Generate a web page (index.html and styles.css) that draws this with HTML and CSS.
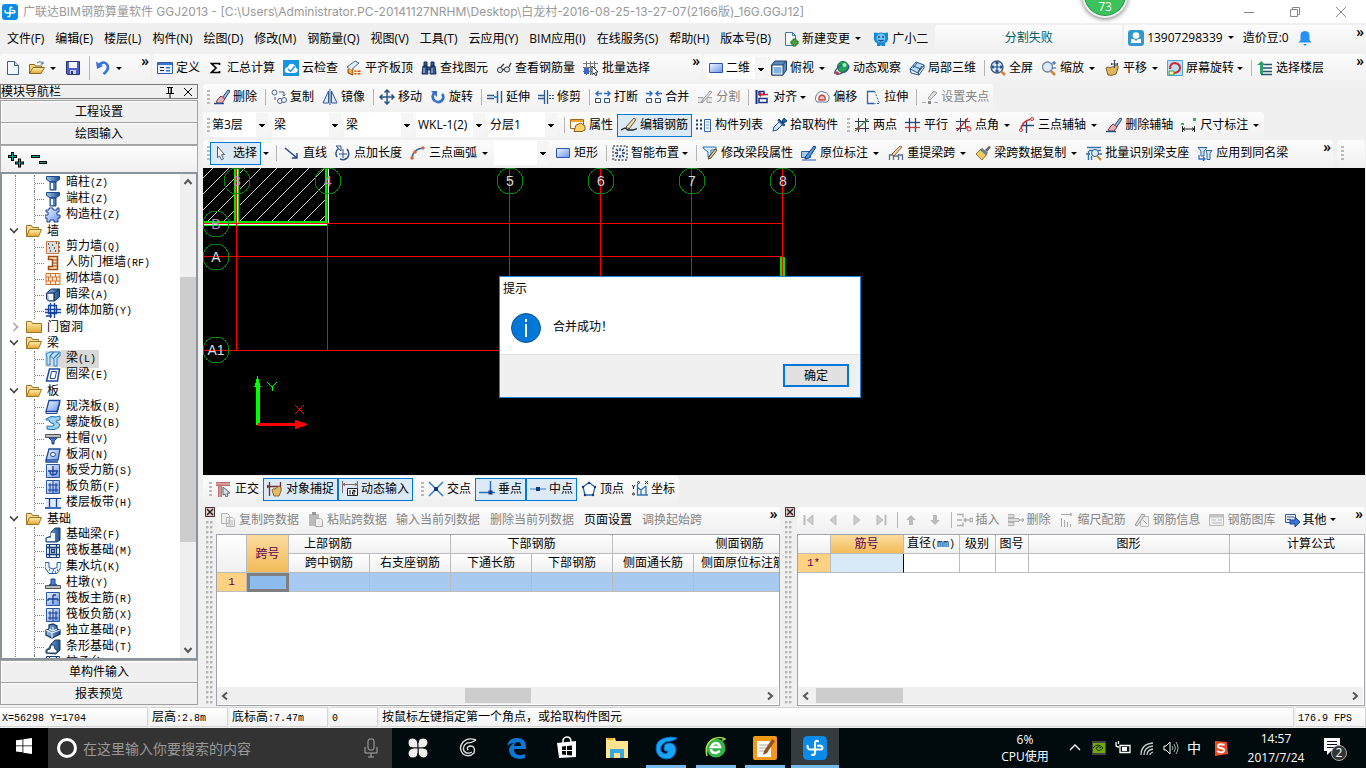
FILE: index.html
```html
<!DOCTYPE html>
<html lang="zh-CN">
<head>
<meta charset="utf-8">
<title>广联达BIM钢筋算量软件 GGJ2013</title>
<link rel="stylesheet" href="styles.css">
</head>
<body>
<svg class="defs" aria-hidden="true">
<defs>
<linearGradient id="gb" x2="1" y2="1"><stop stop-color="#f2f7ff"/><stop offset="1" stop-color="#6a94ee"/></linearGradient>
<linearGradient id="gy" x2="0" y2="1"><stop stop-color="#fff0b0"/><stop offset="1" stop-color="#e3a62f"/></linearGradient>
<linearGradient id="gs" x2="1" y2="0"><stop stop-color="#9cc2ea"/><stop offset="1" stop-color="#1c4d8c"/></linearGradient>
</defs>
<symbol id="logo" viewBox="0 0 16 16"><rect width="16" height="16" rx="3" fill="#0a8be8"/><path d="M10 3.500Q8 2.500 8 5V11Q8 13 6 12.500M10 6.500Q13 6 13 8Q13 9 11 9H5Q3 9 3 6.500" fill="none" stroke="#fff" stroke-width="1.400" stroke-linecap="round"/></symbol>
<symbol id="new" viewBox="0 0 16 16"><path d="M2.500 1.500h7l4 4v9h-11z" fill="#f3f8ff" stroke="#3d5c8c"/><path d="M9.500 1.500v4h4" fill="#bcd0f0" stroke="#3d5c8c"/></symbol>
<symbol id="open" viewBox="0 0 16 16"><path d="M.5 13.500v-9h5l1 1.500h6v3" fill="#f6d27b" stroke="#8a6a2a"/><path d="M.5 13.500 4 7.500h11.500L12 13.500z" fill="url(#gy)" stroke="#8a6a2a"/><path d="M8 3q4-3 6 1m0-2.500V4h-2.500" fill="none" stroke="#4f6c8c"/></symbol>
<symbol id="save" viewBox="0 0 16 16"><path d="M1.500 1.500h13v13h-12l-1-1z" fill="#4b5fc4" stroke="#28357d"/><path d="M4 2h8v6H4z" fill="#f4f7ff"/><path d="M5 10h6v4H5z" fill="#c7cfea"/><path d="M6 11h2v3H6z" fill="#28357d"/></symbol>
<symbol id="undo" viewBox="0 0 16 16"><path d="M3 6q5-6 9-1.500Q15 9 8.500 14" fill="none" stroke="#3b72d9" stroke-width="2.600"/><path d="M1 1.500 2 9l6-3z" fill="#3b72d9"/></symbol>
<symbol id="def" viewBox="0 0 16 16"><path d="M.5 2.500h15v11H.5z" fill="#e8f1ff" stroke="#2e5ca8"/><path d="M1 3h14v2H1z" fill="#3973d2"/><path d="M3 7.500h4m-4 3h4" stroke="#222"/><path d="M9 7h4v1.500H9zm0 3h4v1.500H9z" fill="#3973d2"/></symbol>
<symbol id="sum" viewBox="0 0 16 16"><path d="M11.500 5V3.500H3.500L8 8l-4.500 4.500h8V11" fill="none" stroke="#000" stroke-width="1.700"/></symbol>
<symbol id="cloud" viewBox="0 0 16 16"><path d="M0 0h16v16H0z" fill="#1795e0"/><path d="M4 13q-3-1-2-4 1-2 3-2 1-4 5-3 3 1 3 4 3 1 1 4-1 1-3 1z" fill="#fff"/><path d="m5 9 2.500 2.500L12 6" fill="none" stroke="#1795e0" stroke-width="1.500"/></symbol>
<symbol id="flush" viewBox="0 0 16 16"><path d="m1 7 8-6 4 2-8 7z" fill="#e2ecfa" stroke="#426a9f"/><path d="M2 9v4l5 2V9" fill="#e9b13c" stroke="#8c3b1a"/><path d="M8 10h7v5H8zm0 2.500h7M11 10v5" fill="#d04c24" stroke="#fff2cf"/></symbol>
<symbol id="find" viewBox="0 0 16 16"><path d="M2 6h4l1 8H1zm8 0h4l1 8H9zM3 2h3v4H3zm7 0h3v4h-3zM6 7h4v3H6z" fill="#34568b" stroke="#183155"/><path d="M3 8v5m8-5v5" stroke="#b7cff0"/></symbol>
<symbol id="glass" viewBox="0 0 16 16"><circle cx="4" cy="10" r="2.600" fill="#dde6ee" stroke="#333"/><circle cx="11" cy="9.500" r="2.600" fill="#dde6ee" stroke="#333"/><path d="M6.500 9.500h2M5 7l3-3m5 3 2-4" fill="none" stroke="#333" stroke-width="1.300"/></symbol>
<symbol id="batch" viewBox="0 0 16 16"><path d="M0 3.500h15M0 7.500h13M0 11.500h9M3.500 1v14m4-14v14m4-14v9" stroke="#7a7a7a"/><path d="M1 8h5v6H1z" fill="#3a67c5"/><path d="m9 6 6 6-2.500.3L14 15l-1.500.7L11 13l-2 1.500z" fill="#fff" stroke="#333"/></symbol>
<symbol id="rect" viewBox="0 0 16 16"><path d="M1.500 3.500h13v9h-13z" fill="url(#gb)" stroke="#2c54b0"/></symbol>
<symbol id="cube" viewBox="0 0 16 16"><path d="M.5 5 4 1h11.500v9L12 15H.5z" fill="#5d89b8" stroke="#1f4470"/><path d="M1 5h11v10H1z" fill="#fff" stroke="#1f4470"/><path d="M2.500 7h8v6.500h-8z" fill="#7fb4e5"/><path d="M12 5 15 1" stroke="#1f4470"/></symbol>
<symbol id="orbit" viewBox="0 0 16 16"><circle cx="9" cy="7" r="5.500" fill="#25a35b" stroke="#146a3a"/><circle cx="10.500" cy="5" r="2" fill="#a6edbd"/><path d="M1 14Q0 9 8 5m6 0q3 3-4 7-5 3-8 2" fill="none" stroke="#344f8e" stroke-width="1.300"/><circle cx="3" cy="13" r="1.800" fill="#c1402b"/></symbol>
<symbol id="local" viewBox="0 0 16 16"><path d="m1 9 6-7 8 3-6 8z" fill="#b9dcf5" stroke="#24568a"/><path d="m4 6 8 3m-8-1 4-5m1 9 4-6M1 9l1 4 8 2-1-3m1 3 5-7V5" fill="none" stroke="#24568a"/></symbol>
<symbol id="full" viewBox="0 0 16 16"><circle cx="7" cy="7" r="6" fill="#dcebfb" stroke="#3d5778" stroke-width="1.300"/><path d="M7 2v10M2 7h10M5.500 3.500 7 2l1.500 1.500m-3 7L7 12l1.500-1.500m-5-5L2 7l1.500 1.500m7-3L12 7l-1.500 1.500" fill="none" stroke="#174a91" stroke-width="1.200"/><path d="m11 11 4 4" stroke="#d28531" stroke-width="2.500"/></symbol>
<symbol id="zoom" viewBox="0 0 16 16"><circle cx="6.500" cy="7" r="5" fill="#dcebfb" stroke="#70849b" stroke-width="1.300"/><path d="m10 11 4 4" stroke="#d28531" stroke-width="2.500"/><path d="M13 1v4m-2-2h4m-4 5h4" stroke="#255db0"/></symbol>
<symbol id="pan" viewBox="0 0 16 16"><path d="M2 8q2-2 4 0l6-3q3 0 2 3l-2 6q-4 2-8 1z" fill="#e2b558" stroke="#81602a"/><path d="M10.500 0v8M7 4h7M9.500 1l1-1 1 1M8 3 7 4l1 1m5-2 1 1-1 1" fill="none" stroke="#344765"/></symbol>
<symbol id="rot" viewBox="0 0 16 16"><path d="M.5.500h15v15H.5z" fill="#b9e2f7" stroke="#4aa5d4"/><path d="M3 9q0-6 5-6 5 1 5 5 0 4-6 5" fill="none" stroke="#d4252c" stroke-width="2"/><path d="M2 11h5v4H2z" fill="#f7f7a0" stroke="#4d994f"/></symbol>
<symbol id="floor" viewBox="0 0 16 16"><path d="M4 4.500h11M4 8h11M4 11.500h11M4 14.500h11" stroke="#24566a" stroke-width="1.500"/><path d="M0 5 4.500 1 8 5H6v9H3V5z" fill="#31a06e"/></symbol>
<symbol id="brush" viewBox="0 0 16 16"><path d="M8 9 14 1l2 1-6 9z" fill="#9bb9de" stroke="#24477b"/><path d="m4 10 3-3 4 3-3 4q-4 1-6-1z" fill="#e5b0b4" stroke="#783a4c"/><path d="M0 14.500h10" stroke="#244b87" stroke-width="1.500"/></symbol>
<symbol id="copy" viewBox="0 0 16 16"><g fill="#eef3fa" stroke="#486388"><circle cx="3.500" cy="3.500" r="2.500"/><circle cx="9" cy="12" r="2.500"/><circle cx="13" cy="11" r="2.500"/></g><path d="M8 3h5v4m-1.500-1.500L13 7l1.500-1.500M4 8v3" fill="none" stroke="#486388"/></symbol>
<symbol id="mirror" viewBox="0 0 16 16"><path d="M6.500 2v12H1zm3 0v12H15z" fill="#dbe9fa" stroke="#315b95"/><path d="M8 0v16" stroke="#315b95"/></symbol>
<symbol id="move" viewBox="0 0 16 16"><path d="M8 1v14M1 8h14M5.500 3.500 8 1l2.500 2.500m-5 9L8 15l2.500-2.500m-7-7L1 8l2.500 2.500m9-5L15 8l-2.500 2.500" fill="none" stroke="#2a5484" stroke-width="1.500"/></symbol>
<symbol id="rotate" viewBox="0 0 16 16"><path d="M4 4q-3 5 1 8 5 3 8-2 1-3-1-5" fill="none" stroke="#3a6fca" stroke-width="2.600"/><path d="M1 2h6v6z" fill="#3a6fca"/></symbol>
<symbol id="extend" viewBox="0 0 16 16"><path d="M0 6.500h7m-7 3h7M10.500 2v12m4-12v12" fill="none" stroke="#2d5a8e" stroke-width="1.400"/><path d="M7 8h3" stroke="#3c9be0" stroke-width="2"/></symbol>
<symbol id="trim" viewBox="0 0 16 16"><path d="M6.500 1v14m3-14v14M0 6.500h6m-6 3h6" fill="none" stroke="#2d5a8e" stroke-width="1.300"/><path d="M11 6.500h5m-5 3h5" stroke="#2d5a8e" stroke-dasharray="2 1"/></symbol>
<symbol id="break" viewBox="0 0 16 16"><path d="M.5 9.500h5v4h-5zm9 0h5v4h-5z" fill="#fff" stroke="#31506e"/><path d="M7 4.500H1M3.500 2 1 4.500 3.500 7M9 4.500h6M12.500 2 15 4.500 12.500 7" fill="none" stroke="#2f6ac5" stroke-width="1.400"/></symbol>
<symbol id="join" viewBox="0 0 16 16"><path d="M.5 9.500h5v4h-5zm9 0h5v4h-5z" fill="#fff" stroke="#31506e"/><path d="M0 4.500h6M3.500 2 6 4.500 3.500 7M16 4.500h-6M12.500 2 10 4.500 12.500 7" fill="none" stroke="#2f6ac5" stroke-width="1.400"/></symbol>
<symbol id="split" viewBox="0 0 16 16"><path d="M1 8.500h5v5H1m14-5h-5v5h5M4 13 13 2l2 1-9 10z" fill="#e5e5e5" stroke="#a3a3a3"/></symbol>
<symbol id="align" viewBox="0 0 16 16"><path d="M2.500 1v14" stroke="#172f84" stroke-width="2"/><path d="M5 2.500h5v3H5zm0 7h8v4H5z" fill="#fff" stroke="#172f84" stroke-width="1.500"/><path d="M14 5.500H5m2-2-2 2 2 2" fill="none" stroke="#c4212f" stroke-width="1.300"/></symbol>
<symbol id="offset" viewBox="0 0 16 16"><path d="M3 13Q0 11 2 7q3-6 8-4 6 2 5 7-1 4-5 3z" fill="#fff" stroke="#5c7594"/><path d="M5 11Q4 7 8 6q4 1 3 5z" fill="#f1bbb7" stroke="#c9453f" stroke-width="1.300"/></symbol>
<symbol id="stretch" viewBox="0 0 16 16"><path d="M9.500 2.500h-7v12h7" fill="none" stroke="#3066a2" stroke-width="1.300"/><path d="m9.500 2 5 12.500H10" fill="none" stroke="#3066a2" stroke-dasharray="2 1.500"/></symbol>
<symbol id="grip" viewBox="0 0 16 16"><path d="M0 13.500h4m8 0h4" stroke="#aaa"/><path d="M6 12h3v3H6z" fill="#888"/><path d="m6 9 6-7 3 2-7 7z" fill="#ddd" stroke="#999"/></symbol>
<symbol id="prop" viewBox="0 0 16 16"><path d="M.5 2.500h13v9H.5z" fill="#fff" stroke="#a06a20"/><path d="M1 3h12v2H1z" fill="#f0a62e"/><path d="M4 14.500 6 8l5-2 4 3v4l-3 1.500z" fill="#ffd06b" stroke="#8a5c1b"/></symbol>
<symbol id="pen" viewBox="0 0 16 16"><path d="m5 10 8-9 2 1.500L8 12z" fill="#eddab2" stroke="#6e5240"/><path d="m0 13 4-2 3 2h5l4-1.500" fill="none" stroke="#222" stroke-width="1.300"/></symbol>
<symbol id="list" viewBox="0 0 16 16"><path d="M0 3.500h2m2 0h2m-6 4h2m2 0h2m-6 4h2m2 0h2" stroke="#1c3d70" stroke-width="2"/><path d="M8.500 2.500h6v12h-6z" fill="#fff" stroke="#2e63ad"/><path d="M10 5h3.500m-3.500 3h3.500M10 11h3.500" stroke="#6b91c9"/></symbol>
<symbol id="dropper" viewBox="0 0 16 16"><path d="m2 14 1-4 6-6 3 3-6 6z" fill="#cfe5fa" stroke="#274f88"/><path d="m8 2 6 6-1.500 1L7 3.500zM11 4l2-3 3 3-3 2z" fill="#1e62b9" stroke="#17427c"/></symbol>
<symbol id="two" viewBox="0 0 16 16"><path d="M4.500 1v14m7-14v14M1 4.500h14m-14 7h14" stroke="#2c3654"/><path d="m1 14 13-12" stroke="#3b9b47" stroke-width="1.300"/><circle cx="4.500" cy="11.500" r="1.500" fill="#c32e2e"/></symbol>
<symbol id="para" viewBox="0 0 16 16"><path d="M4.500 1v14m6-14v14" stroke="#294372" stroke-width="1.300"/><path d="M0 10.500h15" stroke="#bf3d3d" stroke-width="1.300"/><path d="M0 5.500h15" stroke="#294372" stroke-width="1.300"/></symbol>
<symbol id="ang" viewBox="0 0 16 16"><path d="M4.500 1v14M0 4.500h14m-14 7h10M9.500 2v8" stroke="#294372"/><path d="M1 14 12 1M9 12q2-4 5-1" fill="none" stroke="#c52d2d" stroke-width="1.300"/><circle cx="13" cy="12" r="2" fill="#fff" stroke="#c52d2d"/></symbol>
<symbol id="aux" viewBox="0 0 16 16"><path d="M7.500 4v12M3 8.500h12" stroke="#294372" stroke-width="1.300"/><path d="M2 13Q2 4 13 2" fill="none" stroke="#c52d2d" stroke-width="1.500"/><g fill="#fff" stroke="#c52d2d"><circle cx="2" cy="13" r="1.500"/><circle cx="13" cy="2" r="1.500"/></g></symbol>
<symbol id="dim" viewBox="0 0 16 16"><path d="M1.500 9v6m12-6v6m-12-3h12M4 10.500 2 12l2 1.500m7-3 2 1.500-2 1.500" fill="none" stroke="#222"/><path d="M0 6h3v2H0zm12-5h3v3h-3z" fill="#3cae53"/></symbol>
<symbol id="cursor" viewBox="0 0 16 16"><path d="m3.500 1.500 7 8-3 .3 2 4-2 1-2-4-2 2z" fill="#fff" stroke="#4d5a6a"/></symbol>
<symbol id="line" viewBox="0 0 16 16"><path d="m1 3 12 10M13 8v5H8" fill="none" stroke="#24418e" stroke-width="1.400"/></symbol>
<symbol id="addlen" viewBox="0 0 16 16"><path d="M4 3q-5 4-2 9m3 2q5 2 8-2 2-4-1-8" fill="none" stroke="#2d5389" stroke-width="1.500"/><path d="M1 1h5v5zM8 4v9m-4-4h8" fill="none" stroke="#2d5389"/></symbol>
<symbol id="arc" viewBox="0 0 16 16"><path d="M2 13Q3 4 13 3" fill="none" stroke="#34679f" stroke-width="1.400"/><g fill="#d9653f"><circle cx="2" cy="13" r="1.800"/><circle cx="5" cy="7" r="1.800"/><circle cx="13" cy="3" r="1.800"/></g></symbol>
<symbol id="smart" viewBox="0 0 16 16"><path d="M1 1h14v14H1z" fill="#eef5ff" stroke="#111" stroke-dasharray="2 1.500"/><path d="M8 3v3m0 4v3M3 8h3m4 0h3M4 4l2 2m4 4 2 2m0-8-2 2m-4 4-2 2" stroke="#1b3260" stroke-width="1.300"/></symbol>
<symbol id="beamp" viewBox="0 0 16 16"><path d="M1 2h13v3H9v4l-3 3V7L1 3z" fill="#dcedff" stroke="#1976bb"/><path d="m7 12 6-8 2 1-6 8-3 1z" fill="#f1cb82" stroke="#57432d"/></symbol>
<symbol id="insitu" viewBox="0 0 16 16"><path d="M.5 6.500h9v6h-9zM1 15h14" fill="#a7c6ef" stroke="#285eae"/><path d="m5 11 8-10 2 1-7 11-4 1z" fill="#4b9ae4" stroke="#173e75"/></symbol>
<symbol id="respan" viewBox="0 0 16 16"><path d="M1.500 15v-5h4v5m5 0v-5h4v5m-9-4h5" fill="none" stroke="#5d7188" stroke-width="1.300"/><path d="m4 9 8-8 2 1-8 9z" fill="#efd2a0" stroke="#8a6645"/></symbol>
<symbol id="spancopy" viewBox="0 0 16 16"><path d="m10 5 4-4 2 1-4 5z" fill="#666"/><path d="m6 4 6 5-5 6-6-6z" fill="#edcc68" stroke="#9b7629"/><path d="m6 4 6 5" stroke="#6e8096" stroke-width="3"/></symbol>
<symbol id="ident" viewBox="0 0 16 16"><path d="M1 2.500h14M3 5.500h12M0 9h4m8 0h4M2.500 6v9m3-4v4" stroke="#2c74b4" stroke-width="1.400"/><circle cx="9" cy="8" r="3.500" fill="#d6eafa" stroke="#335e89"/><path d="m11 11 4 4" stroke="#cf8131" stroke-width="2"/></symbol>
<symbol id="apply" viewBox="0 0 16 16"><path d="M1 2.500h9L7 6v5H4V6zm8 3h6l-2 3v6h-3V9z" fill="#d6e8fc" stroke="#28619a"/><path d="M2 10v4h6m-2-2 2 2-2 2" fill="none" stroke="#356cd0" stroke-width="1.300"/></symbol>
<symbol id="newchg" viewBox="0 0 16 16"><path d="M2.500 1.500h7l3 3v10h-10z" fill="#f4faff" stroke="#3d76a7"/><path d="M9.500 1.500v3h3" fill="none" stroke="#3d76a7"/><path d="M10 8h3v2h2v3h-2v2h-3v-2H8v-3h2z" fill="#42a837" stroke="#297925"/></symbol>
<symbol id="mascot" viewBox="0 0 16 16"><path d="M1 1.500 5 2q3-1 6 0l4-.5V6q1 2-1 5l-2 1v3H9l-1-1-1 1H4v-3l-2-1Q0 8 1 6z" fill="#1688d8"/><circle cx="8" cy="7" r="4.500" fill="#72c1f5"/><path d="M6 5v2m4-2v2M5.500 9q2.500 2 5 0" fill="none" stroke="#0b3e76" stroke-width="1.300"/></symbol>
<symbol id="user" viewBox="0 0 16 16"><rect width="16" height="16" rx="3" fill="#3398d0"/><circle cx="8" cy="5.500" r="3.300" fill="#fff"/><path d="M3 13V9h3l2 2 2-2h3v4z" fill="#fff"/></symbol>
<symbol id="bell" viewBox="0 0 16 16"><path d="M8 1q5 0 4.500 6v3l2 2.500h-13L3.500 10V7Q3 1 8 1zM6 14h4l-2 2z" fill="#2492f5"/></symbol>
<symbol id="ortho" viewBox="0 0 16 16"><path d="M0 3h14M4 1v15" stroke="#d39a9a" stroke-width="3"/><path d="M0 1.500h14M0 4.500h14M2.500 5v11m3-11v11" stroke="#b97070"/><path d="m7 6 7 6-3 .3L12 15l-2 1-1-3-2 1z" fill="#d8e0e9" stroke="#596879"/></symbol>
<symbol id="snap" viewBox="0 0 16 16"><path d="M2.500 1v14M0 5.500h14M13.500 1v8M1 4l-1 1.500L1 7" fill="none" stroke="#7a2e2e" stroke-width="1.300"/><path d="M5 9q1-2 3-1l4-3q3 1 2 5l-2 5H7z" fill="#e3b966" stroke="#8c652b"/></symbol>
<symbol id="dyn" viewBox="0 0 16 16"><path d="M.5 0v12M15.500 0v7M1 3.500h14M3 2 1 3.500 3 5m10-3 2 1.500L13 5" fill="none" stroke="#8a6868"/><path d="M5.500 7.500h10v7h-10z" fill="#fff" stroke="#222"/><path d="M8 9v4.500M10.500 9.500H13v1.500h-2.500v2H13" fill="none" stroke="#000"/></symbol>
<symbol id="cross" viewBox="0 0 16 16"><path d="m1 1 14 14M1 15 15 1" stroke="#3181cd" stroke-width="1.500"/><path d="M6 6h4v4H6z" fill="#153782"/></symbol>
<symbol id="perp" viewBox="0 0 16 16"><path d="M0 11.500h16M11.500 0v11" stroke="#2770bc" stroke-width="1.500"/><path d="M9.500 9.500h4v4h-4z" fill="#153782"/></symbol>
<symbol id="mid" viewBox="0 0 16 16"><path d="M0 8h16" stroke="#65a4dc" stroke-width="1.500"/><path d="M6 6h4v4H6z" fill="#153782"/></symbol>
<symbol id="vertex" viewBox="0 0 16 16"><path d="m8 1.500 6 4.500-2 8H4L2 6z" fill="#fff" stroke="#2a64aa" stroke-width="1.300"/><g fill="#153782"><circle cx="8" cy="2" r="1.200"/><circle cx="14" cy="6" r="1.200"/><circle cx="12" cy="14" r="1.200"/><circle cx="4" cy="14" r="1.200"/><circle cx="2" cy="6" r="1.200"/></g></symbol>
<symbol id="coord" viewBox="0 0 16 16"><path d="M5.500 3v11H16M5 6l4 3 5-4M9 9v5m5-9v9" fill="none" stroke="#2f75b8" stroke-width="1.300"/><path d="m0 4 1.500 2L3 4M1.500 6v2M13 0l3 3m0-3-3 3" stroke="#222" fill="none"/><circle cx="6.500" cy="1.500" r="1" fill="none" stroke="#222"/><circle cx="1.500" cy="13" r="1" fill="none" stroke="#222"/></symbol>
<symbol id="gcopy" viewBox="0 0 16 16"><path d="M1.500 1.500h6l2 2v8h-8zm5 4h6l2 2v7h-8z" fill="#eee" stroke="#b5b5b5"/><path d="M8 9h5m-5 2h5m-5 2h5" stroke="#bbb"/></symbol>
<symbol id="gpaste" viewBox="0 0 16 16"><path d="M1 2h10v12H1z" fill="#bbb"/><path d="M4 0h4v3H4z" fill="#999"/><path d="M7.500 6.500h5l2 2v6h-7z" fill="#eee" stroke="#aaa"/></symbol>
<symbol id="gins" viewBox="0 0 16 16"><path d="M0 2.500h6v3M0 13.500h6v-3M0 8h5m8-1.500h3v3h-3zM12 8H7m2-2L7 8l2 2" fill="none" stroke="#b0b0b0" stroke-width="1.300"/></symbol>
<symbol id="gdel" viewBox="0 0 16 16"><path d="M0 2.500h6v3H0m0 5h6v3H0M0 6.500h11v3H0z" fill="#ddd" stroke="#b0b0b0"/><path d="M11 8h5m-2-2 2 2-2 2" fill="none" stroke="#999"/></symbol>
<symbol id="gscale" viewBox="0 0 16 16"><path d="M2 2.500h11M11 1l2 1.500L11 4M2.500 6v9m3-7v7m3-5v5m3-3v3" fill="none" stroke="#aaa"/></symbol>
<symbol id="ginfo" viewBox="0 0 16 16"><path d="M6.500 4.500h8v10h-8z" fill="#eee" stroke="#bbb"/><path d="m1 13 7-11 3 1-8 11z" fill="#ddd" stroke="#999"/><path d="m9 8 4 4" stroke="#aaa"/></symbol>
<symbol id="glib" viewBox="0 0 16 16"><path d="M.5 2.500h14v11H.5z" fill="#eee" stroke="#bbb"/><path d="M1 3h13v2H1zm2 5h4m2 0h4M3 11h10" fill="#ccc" stroke="#bbb"/></symbol>
<symbol id="other" viewBox="0 0 16 16"><path d="M1.500 2.500h10v8h-10z" fill="#e4f0ff" stroke="#42597b"/><path d="M3 5h7M3 7.500h4" stroke="#42597b"/><path d="M6 8h5V5l5 5-5 5v-3H6z" fill="#3b74da" stroke="#1d4691"/></symbol>
<symbol id="first" viewBox="0 0 16 16"><path d="M3.500 3v10" stroke="#bbb" stroke-width="2"/><path d="M12 3v10L6 8z" fill="#ccc" stroke="#bbb"/></symbol>
<symbol id="prev" viewBox="0 0 16 16"><path d="M11 3v10L5 8z" fill="#ccc" stroke="#bbb"/></symbol>
<symbol id="next" viewBox="0 0 16 16"><path d="M5 3v10l6-5z" fill="#ccc" stroke="#bbb"/></symbol>
<symbol id="last" viewBox="0 0 16 16"><path d="M12.500 3v10" stroke="#bbb" stroke-width="2"/><path d="M4 3v10l6-5z" fill="#ccc" stroke="#bbb"/></symbol>
<symbol id="up" viewBox="0 0 16 16"><path d="m8 3 5 5h-3v5H6V8H3z" fill="#bbb"/></symbol>
<symbol id="down" viewBox="0 0 16 16"><path d="m8 13 5-5h-3V3H6v5H3z" fill="#bbb"/></symbol>
<symbol id="fo" viewBox="0 0 16 16"><path d="M.5 13.500v-11h5l1 2h6v2" fill="#f8dc91" stroke="#9a7628"/><path d="m.5 13.500 3-7h12l-3 7z" fill="url(#gy)" stroke="#9a7628"/></symbol>
<symbol id="fc" viewBox="0 0 16 16"><path d="M.5 13.500v-11h5l1 2h9v9z" fill="url(#gy)" stroke="#9a7628"/></symbol>
<symbol id="col" viewBox="0 0 16 16"><path d="M1.500 1.500h13v3l-3 2h-7l-3-2zM5 7h6v8H5z" fill="url(#gs)" stroke="#1d4a8a"/><path d="M7 8v6" stroke="#fff" stroke-width="2"/></symbol>
<symbol id="gear" viewBox="0 0 16 16"><path d="M4 1h4v2h4V1h2v4h-2v3h3v3h-2v4h-4v-2H5v2H2v-4H0V8h3V5H1V3h3z" fill="url(#gb)" stroke="#1d3f96"/></symbol>
<symbol id="shear" viewBox="0 0 16 16"><path d="M1.500 2.500h12v12h-12z" fill="#ddd" stroke="#c77b4c"/><path d="M3 5h1m3 1h1m3-2h1M4 9h1m4 0h1m-5 3h1m4 0h1" stroke="#333" stroke-width="1.500"/><path d="M14 3v11" stroke="#cc6422" stroke-width="2" stroke-dasharray="2 2"/></symbol>
<symbol id="door" viewBox="0 0 16 16"><path d="M3.500 1.500h9v13h-9v-3h4v-7h-4z" fill="#ffe2b8" stroke="#9a4b17" stroke-width="1.500"/><path d="M8 5h4m-4 3h4m-4 3h4" stroke="#9a4b17"/></symbol>
<symbol id="brick" viewBox="0 0 16 16"><path d="M1 2.500h14v11H1zM1 6h14M1 10h14M5.500 2.500V6m5-3.500V6M3.500 6v4m4-4v4m4-4v4m-6 0v3.500m5-3.500v3.500" fill="#ffeed8" stroke="#cf7332"/></symbol>
<symbol id="dbeam" viewBox="0 0 16 16"><path d="m1.500 6 5-4h8v8l-5 4h-6l-2-2z" fill="url(#gs)" stroke="#18365f"/><path d="M3 7h5v6H4z" fill="#f3f8ff"/><path d="M2 6h7.500v8M9.500 6l5-4" fill="none" stroke="#18365f"/></symbol>
<symbol id="rebar" viewBox="0 0 16 16"><path d="M0 6.500h16M0 9.500h16M3.500 2.500h8v8h-8zM5.500 0v15m4-15v15M1 13h6" fill="none" stroke="#1544a0" stroke-width="1.300"/></symbol>
<symbol id="beam" viewBox="0 0 16 16"><path d="M1 3 5 1h10v4l-3 2v8H9V8L5 5v9H2V6z" fill="#c7e3ff" stroke="#2782ca"/><path d="M5 5 9 1m0 6 5-5" stroke="#2782ca" stroke-width="1.300"/></symbol>
<symbol id="ring" viewBox="0 0 16 16"><path d="M4.500 2h10l-2 12h-11z" fill="#fff" stroke="#1b4a9a" stroke-width="1.500"/><path d="M6.500 4.500h5L10 11.500H5z" fill="#fff" stroke="#1b4a9a"/></symbol>
<symbol id="slab" viewBox="0 0 16 16"><path d="M4 1.500h11l-3 11H1z" fill="url(#gb)" stroke="#1b4a9a" stroke-width="1.300"/><path d="M1 12.500v2h11l3-11" fill="none" stroke="#1b4a9a"/></symbol>
<symbol id="spiral" viewBox="0 0 16 16"><path d="M1 4q5-4 10-2l4-1v4q-5 0-4 2 5 1 3 5-4 4-12 2v-3q8 1 7-2-5-1-5-4H1z" fill="#9fd3fa" stroke="#1570b5"/></symbol>
<symbol id="cap" viewBox="0 0 16 16"><path d="M.5 3.500h15v3H.5z" fill="#bbb" stroke="#555"/><path d="M4 7h8l-3 3v3H7v-3z" fill="#4b82d9" stroke="#173f92"/></symbol>
<symbol id="hole" viewBox="0 0 16 16"><path d="M4 2h11l-2 11H1zM1 13v2h12" fill="url(#gb)" stroke="#1b4a9a" stroke-width="1.300"/><ellipse cx="8" cy="7.500" rx="2.500" ry="2" fill="#fff" stroke="#1b4a9a"/></symbol>
<symbol id="force" viewBox="0 0 16 16"><path d="M1.500 1.500h13v13h-13z" fill="url(#gb)" stroke="#2b55a8"/><path d="M3 8h10M8 3v9q-3 0-3-4m3 4q4 0 4-4" fill="none" stroke="#173f92" stroke-width="1.300"/></symbol>
<symbol id="neg" viewBox="0 0 16 16"><path d="M1.500 1.500h13v13h-13z" fill="url(#gb)" stroke="#2b55a8"/><path d="M3 6h10M3 11h10M5 4v9m6-9v9M8 2v12" fill="none" stroke="#173f92"/></symbol>
<symbol id="band" viewBox="0 0 16 16"><path d="M1 3h14v9H1z" fill="#dfeaff"/><path d="M0 3.500h16" stroke="#173f92"/><path d="M4.500 4v9m7-9v9" stroke="#173f92" stroke-width="1.300"/><path d="M0 13h16" stroke="#3e6fc8" stroke-width="2"/></symbol>
<symbol id="fbeam" viewBox="0 0 16 16"><path d="M1 15v-4l5-2V5l4-4h5v12l-3 2z" fill="url(#gs)" stroke="#174065"/><path d="M2 11h4V6h4v8H2z" fill="#f3f9ff"/></symbol>
<symbol id="raft" viewBox="0 0 16 16"><path d="M1.500 1.500h13v13h-13z" fill="#eaf3ff" stroke="#173f7a"/><path d="M1 4.500h14M1 11.500h14M4.500 1v14m7-14v14M6.500 6.500h3v3h-3z" fill="none" stroke="#173f7a" stroke-width="1.300"/></symbol>
<symbol id="pit" viewBox="0 0 16 16"><path d="M0 3.500h4v5q4 3 8 0v-5h4v5l-4 6H4L0 9z" fill="#eaf5ff" stroke="#245ea5"/><path d="M4 11h1m3 0h1m3 0h1M7 13h1m2 0h1" stroke="#245ea5" stroke-width="1.500"/></symbol>
<symbol id="pier" viewBox="0 0 16 16"><path d="M.5 10.500h15v3H.5z" fill="#bbb" stroke="#555"/><path d="M4 10q2 0 2-2V4h4v4q0 2 2 2z" fill="#4b82d9" stroke="#173f92"/></symbol>
<symbol id="main" viewBox="0 0 16 16"><path d="M1.500 1.500h13v13h-13z" fill="url(#gb)" stroke="#2b55a8"/><path d="M3 8h10M8 4v9M11 4H8M3 10V8m10 2V8" fill="none" stroke="#173f92" stroke-width="1.300"/></symbol>
<symbol id="iso" viewBox="0 0 16 16"><path d="m1 7 3-1V2l4-1 4 2v3l3 1v4l-8 4-6-3z" fill="url(#gs)" stroke="#163864" stroke-width="1.300"/><path d="m1 7 6 3 8-3M7 10v5M4 6l4 2 4-2M8 4v4" fill="none" stroke="#fff"/></symbol>
<symbol id="strip" viewBox="0 0 16 16"><path d="M1 14v-3l3-2 2-4 4-4h5v10l-4 4z" fill="url(#gs)" stroke="#174065"/><path d="M2 14v-3l3-1 1-4h3l1 4 2 1v3z" fill="#fff" stroke="#174065"/></symbol>
</svg>

<header class="title">
  <svg class="i"><use href="#logo"/></svg>
  <h1>广联达BIM钢筋算量软件 GGJ2013 - [C:\Users\Administrator.PC-20141127NRHM\Desktop\白龙村-2016-08-25-13-27-07(2166版)_16G.GGJ12]</h1>
  <div class="wins">
    <button aria-label="最小化"><svg class="i" viewBox="0 0 16 16"><path d="M3 8.500h10"/></svg></button>
    <button aria-label="还原"><svg class="i" viewBox="0 0 16 16"><path d="M3.500 5.500h7v7h-7zm2 0v-2h7v7h-2"/></svg></button>
    <button aria-label="关闭"><svg class="i" viewBox="0 0 16 16"><path d="m3 3 10 10M3 13 13 3"/></svg></button>
  </div>
</header>
<div class="ball">73</div>

<nav class="menu">
  <button>文件(F)</button><button>编辑(E)</button><button>楼层(L)</button><button>构件(N)</button><button>绘图(D)</button><button>修改(M)</button><button>钢筋量(Q)</button><button>视图(V)</button><button>工具(T)</button><button>云应用(Y)</button><button>BIM应用(I)</button><button>在线服务(S)</button><button>帮助(H)</button><button>版本号(B)</button>
  <button class="t"><svg class="i"><use href="#newchg"/></svg>新建变更<b class="a"></b></button>
  <button class="t"><svg class="i"><use href="#mascot"/></svg>广小二</button>
  <div class="tb notice">分割失败</div>
  <div class="tb account">
    <button class="t"><svg class="i"><use href="#user"/></svg>13907298339<b class="a"></b></button>
    <button class="bean">造价豆:0</button>
    <button class="t" aria-label="通知"><svg class="i"><use href="#bell"/></svg></button>
    <span class="more">»</span>
  </div>
</nav>

<div class="row row-top">
  <div class="tb files">
    <button class="t" aria-label="新建"><svg class="i"><use href="#new"/></svg></button>
    <button class="t" aria-label="打开"><svg class="i"><use href="#open"/></svg><b class="a"></b></button>
    <button class="t" aria-label="保存"><svg class="i"><use href="#save"/></svg></button>
    <i class="sep"></i>
    <button class="t" aria-label="撤销"><svg class="i"><use href="#undo"/></svg><b class="a"></b></button>
    <span class="more">»</span>
  </div>
  <div class="tb tools">
    <button class="t"><svg class="i"><use href="#def"/></svg>定义</button>
    <button class="t"><svg class="i"><use href="#sum"/></svg>汇总计算</button>
    <button class="t"><svg class="i"><use href="#cloud"/></svg>云检查</button>
    <button class="t"><svg class="i"><use href="#flush"/></svg>平齐板顶</button>
    <button class="t"><svg class="i"><use href="#find"/></svg>查找图元</button>
    <button class="t"><svg class="i"><use href="#glass"/></svg>查看钢筋量</button>
    <button class="t"><svg class="i"><use href="#batch"/></svg>批量选择</button>
    <span class="more">»</span>
  </div>
  <div class="tb grow views">
    <label class="viewmode"><svg class="i"><use href="#rect"/></svg><select aria-label="视图"><option>二维</option></select></label>
    <button class="t"><svg class="i"><use href="#cube"/></svg>俯视<b class="a"></b></button>
    <button class="t"><svg class="i"><use href="#orbit"/></svg>动态观察</button>
    <button class="t"><svg class="i"><use href="#local"/></svg>局部三维</button>
    <i class="sep"></i>
    <button class="t"><svg class="i"><use href="#full"/></svg>全屏</button>
    <button class="t"><svg class="i"><use href="#zoom"/></svg>缩放<b class="a"></b></button>
    <button class="t"><svg class="i"><use href="#pan"/></svg>平移<b class="a"></b></button>
    <button class="t"><svg class="i"><use href="#rot"/></svg>屏幕旋转<b class="a n"></b></button>
    <i class="sep"></i>
    <button class="t"><svg class="i"><use href="#floor"/></svg>选择楼层</button>
    <span class="more">»</span>
  </div>
</div>

<main>
<aside>
  <div class="cap"><span>模块导航栏</span><svg viewBox="0 0 30 12"><path d="M3 1.500h6M4.500 1v6m3-6v6M2 7.500h8M6 8v4M7 1v6M20 2l8 8m-8 0 8-8" fill="none" stroke="#000"/></svg></div>
  <button class="bar">工程设置</button>
  <button class="bar">绘图输入</button>
  <div class="expand">
    <button aria-label="全部展开"><svg viewBox="0 0 18 18"><path d="M5.500 1v9M1 5.500h9m2.500 2v9m-4.500-4.500h9" stroke="#000" stroke-width="3"/><path d="M5.500 2v7M2 5.500h7m3.500 3v7m-3.500-3.500h7" stroke="#17a59a"/></svg></button>
    <button aria-label="全部折叠"><svg viewBox="0 0 18 18"><path d="M1 5.500h9m-1 6h8" stroke="#000" stroke-width="3"/><path d="M2 5.500h7m1 6h6" stroke="#17a59a"/></svg></button>
  </div>
  <div class="treebox">
    <div class="tree">
      <ul>
        <li><svg class="i"><use href="#col"/></svg><span>暗柱<tt>(Z)</tt></span></li>
        <li><svg class="i"><use href="#col"/></svg><span>端柱<tt>(Z)</tt></span></li>
        <li><svg class="i"><use href="#gear"/></svg><span>构造柱<tt>(Z)</tt></span></li>
      </ul>
      <button class="g"><i class="ch"></i><svg class="i"><use href="#fo"/></svg>墙</button>
      <ul>
        <li><svg class="i"><use href="#shear"/></svg><span>剪力墙<tt>(Q)</tt></span></li>
        <li><svg class="i"><use href="#door"/></svg><span>人防门框墙<tt>(RF)</tt></span></li>
        <li><svg class="i"><use href="#brick"/></svg><span>砌体墙<tt>(Q)</tt></span></li>
        <li><svg class="i"><use href="#dbeam"/></svg><span>暗梁<tt>(A)</tt></span></li>
        <li><svg class="i"><use href="#rebar"/></svg><span>砌体加筋<tt>(Y)</tt></span></li>
      </ul>
      <button class="g"><i class="ch closed"></i><svg class="i"><use href="#fc"/></svg>门窗洞</button>
      <button class="g"><i class="ch"></i><svg class="i"><use href="#fo"/></svg>梁</button>
      <ul>
        <li class="sel"><svg class="i"><use href="#beam"/></svg><span>梁<tt>(L)</tt></span></li>
        <li><svg class="i"><use href="#ring"/></svg><span>圈梁<tt>(E)</tt></span></li>
      </ul>
      <button class="g"><i class="ch"></i><svg class="i"><use href="#fo"/></svg>板</button>
      <ul>
        <li><svg class="i"><use href="#slab"/></svg><span>现浇板<tt>(B)</tt></span></li>
        <li><svg class="i"><use href="#spiral"/></svg><span>螺旋板<tt>(B)</tt></span></li>
        <li><svg class="i"><use href="#cap"/></svg><span>柱帽<tt>(V)</tt></span></li>
        <li><svg class="i"><use href="#hole"/></svg><span>板洞<tt>(N)</tt></span></li>
        <li><svg class="i"><use href="#force"/></svg><span>板受力筋<tt>(S)</tt></span></li>
        <li><svg class="i"><use href="#neg"/></svg><span>板负筋<tt>(F)</tt></span></li>
        <li><svg class="i"><use href="#band"/></svg><span>楼层板带<tt>(H)</tt></span></li>
      </ul>
      <button class="g"><i class="ch"></i><svg class="i"><use href="#fo"/></svg>基础</button>
      <ul>
        <li><svg class="i"><use href="#fbeam"/></svg><span>基础梁<tt>(F)</tt></span></li>
        <li><svg class="i"><use href="#raft"/></svg><span>筏板基础<tt>(M)</tt></span></li>
        <li><svg class="i"><use href="#pit"/></svg><span>集水坑<tt>(K)</tt></span></li>
        <li><svg class="i"><use href="#pier"/></svg><span>柱墩<tt>(Y)</tt></span></li>
        <li><svg class="i"><use href="#main"/></svg><span>筏板主筋<tt>(R)</tt></span></li>
        <li><svg class="i"><use href="#neg"/></svg><span>筏板负筋<tt>(X)</tt></span></li>
        <li><svg class="i"><use href="#iso"/></svg><span>独立基础<tt>(P)</tt></span></li>
        <li><svg class="i"><use href="#strip"/></svg><span>条形基础<tt>(T)</tt></span></li>
        <li><svg class="i"><use href="#raft"/></svg><span>桩承台<tt>(V)</tt></span></li>
      </ul>
    </div>
    <div class="vscroll"><svg viewBox="0 0 16 16"><path d="m4.500 10 3.500-4 3.500 4"/></svg><i></i><svg viewBox="0 0 16 16"><path d="m4.500 6 3.500 4 3.500-4"/></svg></div>
  </div>
  <button class="bar">单构件输入</button>
  <button class="bar">报表预览</button>
</aside>

<section class="work">
  <div class="row">
    <div class="tb">
      <i class="hd"></i>
      <button class="t"><svg class="i"><use href="#brush"/></svg>删除</button><i class="sep"></i>
      <button class="t"><svg class="i"><use href="#copy"/></svg>复制</button>
      <button class="t"><svg class="i"><use href="#mirror"/></svg>镜像</button><i class="sep"></i>
      <button class="t"><svg class="i"><use href="#move"/></svg>移动</button>
      <button class="t"><svg class="i"><use href="#rotate"/></svg>旋转</button><i class="sep"></i>
      <button class="t"><svg class="i"><use href="#extend"/></svg>延伸</button>
      <button class="t"><svg class="i"><use href="#trim"/></svg>修剪</button><i class="sep"></i>
      <button class="t"><svg class="i"><use href="#break"/></svg>打断</button>
      <button class="t"><svg class="i"><use href="#join"/></svg>合并</button>
      <button class="t" disabled><svg class="i"><use href="#split"/></svg>分割</button><i class="sep"></i>
      <button class="t"><svg class="i"><use href="#align"/></svg>对齐<b class="a n"></b></button>
      <button class="t"><svg class="i"><use href="#offset"/></svg>偏移</button>
      <button class="t"><svg class="i"><use href="#stretch"/></svg>拉伸</button><i class="sep"></i>
      <button class="t" disabled><svg class="i"><use href="#grip"/></svg>设置夹点</button>
    </div>
  </div>
  <div class="row">
    <div class="tb">
      <i class="hd"></i>
      <select class="c1" aria-label="楼层"><option>第3层</option></select>
      <select class="c2" aria-label="构件类别"><option>梁</option></select>
      <select class="c2" aria-label="构件类型"><option>梁</option></select>
      <select class="c2" aria-label="构件名称"><option>WKL-1(2)</option></select>
      <select class="c2" aria-label="分层"><option>分层1</option></select>
      <i class="sep"></i>
      <button class="t"><svg class="i"><use href="#prop"/></svg>属性</button>
      <button class="t on"><svg class="i"><use href="#pen"/></svg>编辑钢筋</button>
      <button class="t"><svg class="i"><use href="#list"/></svg>构件列表</button>
      <button class="t"><svg class="i"><use href="#dropper"/></svg>拾取构件</button>
    </div>
    <div class="tb">
      <i class="hd"></i>
      <button class="t"><svg class="i"><use href="#two"/></svg>两点</button>
      <button class="t"><svg class="i"><use href="#para"/></svg>平行</button>
      <button class="t"><svg class="i"><use href="#ang"/></svg>点角<b class="a"></b></button>
      <button class="t"><svg class="i"><use href="#aux"/></svg>三点辅轴<b class="a"></b></button>
      <button class="t"><svg class="i"><use href="#brush"/></svg>删除辅轴</button>
      <button class="t"><svg class="i"><use href="#dim"/></svg>尺寸标注<b class="a"></b></button>
    </div>
  </div>
  <div class="row">
    <div class="tb grow">
      <i class="hd"></i>
      <button class="t on"><svg class="i"><use href="#cursor"/></svg>选择</button><b class="a tight"></b><i class="sep wide"></i>
      <button class="t"><svg class="i"><use href="#line"/></svg>直线</button>
      <button class="t"><svg class="i"><use href="#addlen"/></svg>点加长度</button>
      <button class="t"><svg class="i"><use href="#arc"/></svg>三点画弧<b class="a"></b></button>
      <select class="c1" aria-label="画法"><option></option></select>
      <button class="t"><svg class="i"><use href="#rect"/></svg>矩形</button><i class="sep"></i>
      <button class="t"><svg class="i"><use href="#smart"/></svg>智能布置<b class="a n"></b></button><i class="sep"></i>
      <button class="t"><svg class="i"><use href="#beamp"/></svg>修改梁段属性</button>
      <button class="t"><svg class="i"><use href="#insitu"/></svg>原位标注<b class="a"></b></button>
      <button class="t"><svg class="i"><use href="#respan"/></svg>重提梁跨<b class="a"></b></button>
      <button class="t"><svg class="i"><use href="#spancopy"/></svg>梁跨数据复制<b class="a"></b></button>
      <button class="t"><svg class="i"><use href="#ident"/></svg>批量识别梁支座</button>
      <button class="t"><svg class="i"><use href="#apply"/></svg>应用到同名梁</button>
      <span class="more">»</span>
    </div>
    <div class="tb stub"><i class="hd"></i></div>
  </div>

  <div class="view">
    <svg class="cad" width="1163" height="307" shape-rendering="crispEdges">
      <defs><clipPath id="hc"><path d="M0 0h31v53H0zM37 0h85v53H37z"/></clipPath></defs>
      <path clip-path="url(#hc)" d="M-38 64 26-0M-22 64 42 0M-6 64 58 0M10 64 74 0M26 64 90 0M42 64 106 0M58 64 122 0M74 64 138 0M90 64 154 0M106 64 170 0M-54 64 10 0" stroke="#c8c8c8" fill="none"/>
      <path d="M31 0h2v55h-2zM35 0h1v55h-1zM0 53h124v2H0zM0 57h124v1H0zM122 0h2v55h-2zM577 89h5v20h-5z" fill="#00e800"/>
      <path d="M34 0h1v55h-1zM0 56h124v1H0zM125 0h1v55h-1z" fill="#fff"/>
      <path d="M33.500 0v182M124.500 0v182M306.500 0v182M397.500 0v182M488.500 0v182M579.500 0v182M0 55.500h580M0 88.500h580M0 182.500h580" stroke="#f00" fill="none"/>
      <g fill="none" stroke="#008a00"><circle cx="34" cy="13" r="13"/><circle cx="125" cy="13" r="13"/><circle cx="307" cy="13" r="13"/><circle cx="398" cy="13" r="13"/><circle cx="489" cy="13" r="13"/><circle cx="580" cy="13" r="13"/><circle cx="13" cy="56" r="13"/><circle cx="13" cy="89" r="13"/><circle cx="13" cy="182" r="13"/></g>
      <g class="axis"><text class="dim" x="34" y="18">3</text><text class="dim" x="125" y="18">4</text><text x="307" y="18">5</text><text x="398" y="18">6</text><text x="489" y="18">7</text><text x="580" y="18">8</text><text class="dim" x="13" y="61">B</text><text x="13" y="94">A</text><text x="13" y="187">A1</text></g>
      <path d="M53 257v-38h-2l2-5 1-6h1l1 6 2 5h-1v38z" fill="#0f0"/>
      <path d="M55 255h37v-3l6 2 6 2v1l-6 2-6 2v-3H55z" fill="red"/>
      <path d="m64 214 5 5 5-5m-5 5v4" stroke="#0f0" fill="none"/><path d="m92 237 9 9m-9 0 9-9" stroke="red" fill="none"/>
    </svg>
    <div class="dialog" role="dialog" aria-labelledby="dt">
      <h2 id="dt">提示</h2>
      <div class="msg"><svg viewBox="0 0 30 30"><circle cx="15" cy="15" r="14.500" fill="#0078d7" stroke="#12558c"/><path d="M15 11v13M15 6v3" stroke="#fff" stroke-width="2"/></svg><p>合并成功！</p></div>
      <div class="foot"><button>确定</button></div>
    </div>
  </div>

  <div class="row snaps">
    <div class="tb">
      <i class="hd"></i>
      <button class="t"><svg class="i"><use href="#ortho"/></svg>正交</button>
      <button class="t on"><svg class="i"><use href="#snap"/></svg>对象捕捉</button>
      <button class="t on"><svg class="i"><use href="#dyn"/></svg>动态输入</button>
    </div>
    <div class="tb">
      <i class="hd"></i>
      <button class="t"><svg class="i"><use href="#cross"/></svg>交点</button>
      <button class="t on"><svg class="i"><use href="#perp"/></svg>垂点</button>
      <button class="t on"><svg class="i"><use href="#mid"/></svg>中点</button>
      <button class="t"><svg class="i"><use href="#vertex"/></svg>顶点</button>
      <button class="t"><svg class="i"><use href="#coord"/></svg>坐标</button>
    </div>
  </div>

  <div class="panels">
    <div class="dots"><svg viewBox="0 0 10 10"><path d="M.5.500h9v9h-9z" fill="#f0c8c8" stroke="#333"/><path d="m2 2 6 6M2 8l6-6" stroke="#222" stroke-width="1.500"/></svg><i></i></div>
    <div class="panel p1">
      <div class="tb ptb">
        <button class="t" disabled><svg class="i"><use href="#gcopy"/></svg>复制跨数据</button>
        <button class="t" disabled><svg class="i"><use href="#gpaste"/></svg>粘贴跨数据</button>
        <button class="t" disabled>输入当前列数据</button>
        <button class="t" disabled>删除当前列数据</button>
        <button class="t">页面设置</button>
        <button class="t" disabled>调换起始跨</button>
        <span class="more">»</span>
      </div>
      <div class="sheet">
        <table class="t1">
          <colgroup><col class="w30"><col class="w42"><col class="w81"><col class="w81"><col class="w81"><col class="w81"><col class="w81"><col class="w99"></colgroup>
          <tr><th rowspan="2"></th><th rowspan="2" class="hot">跨号</th><th colspan="2" class="up">上部钢筋</th><th colspan="2">下部钢筋</th><th colspan="2" class="side">侧面钢筋</th></tr>
          <tr><th>跨中钢筋</th><th>右支座钢筋</th><th>下通长筋</th><th>下部钢筋</th><th>侧面通长筋</th><th>侧面原位标注筋</th></tr>
          <tr class="sel"><th class="num">1</th><td class="cur"></td><td></td><td></td><td></td><td></td><td></td><td></td></tr>
        </table>
        <div class="hscroll"><svg viewBox="0 0 16 16"><path d="m10 4.500-4 3.500 4 3.500"/></svg><i></i><svg viewBox="0 0 16 16"><path d="m6 4.500 4 3.500-4 3.500"/></svg></div>
      </div>
    </div>
    <div class="dots second"><svg viewBox="0 0 10 10"><path d="M.5.500h9v9h-9z" fill="#f0c8c8" stroke="#333"/><path d="m2 2 6 6M2 8l6-6" stroke="#222" stroke-width="1.500"/></svg><i></i></div>
    <div class="panel p2">
      <div class="tb ptb">
        <button class="t" disabled aria-label="第一条"><svg class="i"><use href="#first"/></svg></button>
        <button class="t" disabled aria-label="上一条"><svg class="i"><use href="#prev"/></svg></button>
        <button class="t" disabled aria-label="下一条"><svg class="i"><use href="#next"/></svg></button>
        <button class="t" disabled aria-label="最后一条"><svg class="i"><use href="#last"/></svg></button><i class="sep"></i>
        <button class="t" disabled aria-label="上移"><svg class="i"><use href="#up"/></svg></button>
        <button class="t" disabled aria-label="下移"><svg class="i"><use href="#down"/></svg></button><i class="sep"></i>
        <button class="t" disabled><svg class="i"><use href="#gins"/></svg>插入</button>
        <button class="t" disabled><svg class="i"><use href="#gdel"/></svg>删除</button>
        <button class="t" disabled><svg class="i"><use href="#gscale"/></svg>缩尺配筋</button>
        <button class="t" disabled><svg class="i"><use href="#ginfo"/></svg>钢筋信息</button>
        <button class="t" disabled><svg class="i"><use href="#glib"/></svg>钢筋图库</button>
        <button class="t"><svg class="i"><use href="#other"/></svg>其他<b class="a n"></b></button>
        <span class="more">»</span>
      </div>
      <div class="sheet">
        <table class="t2">
          <colgroup><col class="w33"><col class="w73"><col class="w56"><col class="w36"><col class="w33"><col class="w201"><col class="w164"></colgroup>
          <tr><th></th><th class="hot">筋号</th><th>直径<tt>(mm)</tt></th><th>级别</th><th>图号</th><th>图形</th><th>计算公式</th></tr>
          <tr><th class="num">1*</th><td class="edit"></td><td></td><td></td><td></td><td></td><td></td></tr>
        </table>
        <div class="hscroll"><svg viewBox="0 0 16 16"><path d="m10 4.500-4 3.500 4 3.500"/></svg><i></i><svg viewBox="0 0 16 16"><path d="m6 4.500 4 3.500-4 3.500"/></svg></div>
      </div>
    </div>
  </div>
</section>
</main>

<footer class="status">
  <div class="s1"><tt>X=56298 Y=1704</tt></div><div class="s2">层高<tt>:2.8m</tt></div><div class="s3">底标高<tt>:7.47m</tt></div><div class="s4"><tt>0</tt></div><div class="grow">按鼠标左键指定第一个角点，或拾取构件图元</div><div class="s5"><tt>176.9 FPS</tt></div>
</footer>

<div class="taskbar">
  <button class="start" aria-label="开始"><svg viewBox="0 0 16 16"><path d="m0 2.300 6.500-.9v6H0zM7.300 1.300 16 0v7.400H7.300zM0 8.300h6.500v6L0 13.400zM7.300 8.300H16V16l-8.700-1.300z" fill="#fff"/></svg></button>
  <label class="search"><svg viewBox="0 0 22 22"><circle cx="11" cy="11" r="8.500" fill="none" stroke="#fff" stroke-width="3"/></svg><input type="text" placeholder="在这里输入你要搜索的内容"><svg class="mic" viewBox="0 0 16 20"><rect x="5" y="1" width="6" height="11" rx="2" /><path d="M2 9v6h12V9M8 15v4m-3 0h6"/></svg></label>
  <div class="apps">
    <button aria-label="风车"><svg viewBox="0 0 24 24"><g fill="#eee" stroke="#111"><path d="M12 12Q2 13 2 7q0-5 5-5 6 1 5 10z"/><path d="M12 12Q11 2 17 2q5 0 5 5-1 6-10 5z"/><path d="M12 12q10-1 10 5 0 5-5 5-6-1-5-10z"/><path d="M12 12q1 10-5 10-5 0-5-5 1-6 10-5z"/></g></svg></button>
    <button aria-label="旋风"><svg viewBox="0 0 24 24"><path d="M20 4q-8-3-13 2-5 6 0 12 6 4 11-1 2-7-4-7-4 1-2 4m8-10q-4 3-9 3-5 3-3 8 3 4 8 1" fill="none" stroke="#ddd" stroke-width="1.400"/></svg></button>
    <button aria-label="Edge"><svg viewBox="0 0 24 24"><path d="M2 11Q3 2 12 2q9 0 9 9v2H9q0 6 6 6 3 0 5-1v4q-3 1-6 1Q4 22 4 13q1-4 5-6-5 0-7 4zm7-1h7q0-4-3-4t-4 4z" fill="#0a78d6"/></svg></button>
    <button aria-label="应用商店"><svg viewBox="0 0 24 24"><path d="M2 7 21 5v16L4 22z" fill="#fff"/><path d="M8 7V4q1-3 4-3 4 0 4 5" fill="none" stroke="#fff" stroke-width="1.500"/><path d="M7 10.500 11 10v4H7zm5-.5 5-.5V14h-5zM7 15h4v4l-4-.5zm5 0h5v4.500l-5-.5z" fill="#05090b"/></svg></button>
    <button aria-label="文件资源管理器"><svg viewBox="0 0 24 24"><path d="M1 2h9l1 3h12v17H1z" fill="#ffe38d"/><path d="M2 2h6v2H2z" fill="#f0ad27"/><path d="M5 22v-9h14v9h-4v-5H9v5z" fill="#36a7df"/></svg></button>
    <button class="run" aria-label="浏览器"><svg viewBox="0 0 24 24"><path d="M23 2Q17 0 11 2 2 4 2 13q1 9 10 10 9 0 10-9 0-6-6-7-6 0-6 5 0 4 4 3-1 4-5 2-4-3-1-8 3-4 9-4 3 0 6-3z" fill="#18a5f5" stroke="#0b65c8"/></svg></button>
    <button class="run" aria-label="360"><svg viewBox="0 0 24 24"><circle cx="12" cy="12" r="9.500" fill="#36b44a"/><path d="M7 11h9q-1-4-4-4t-5 4zm0 2q0 4 5 4l4-2" fill="none" stroke="#fff" stroke-width="2.500"/><path d="M3 20Q0 8 9 3q7-3 12 0-1 1-3 1" fill="none" stroke="#a8db49" stroke-width="1.500"/></svg></button>
    <button class="run" aria-label="记事"><svg viewBox="0 0 24 24"><rect width="24" height="24" rx="2" fill="#f39817"/><path d="M4 5h14v16H4z" fill="#fff"/><path d="M6 9h9m-9 3h8m-8 3h6" stroke="#aaa"/><path d="m11 15 8-12 3 2-8 12-4 2z" fill="#96521b"/></svg></button>
    <button class="run cur" aria-label="广联达"><svg><use href="#logo"/></svg></button>
  </div>
  <div class="cpu">6%<br>CPU使用</div>
  <div class="tray">
    <svg viewBox="0 0 16 16"><path d="m3 10 5-5 5 5" fill="none" stroke="#fff" stroke-width="1.300"/></svg>
    <svg viewBox="0 0 16 16"><path d="M1 1h14v14H1z" fill="#444"/><path d="M2 3h12v10H2z" fill="#6fa900"/><path d="M2 8q5-6 10 0-5 5-7 0 3-3 5 0" fill="none" stroke="#17300a"/></svg>
    <svg viewBox="0 0 16 16"><path d="M5 5.500h10v7H5zM1 2v3q0 2 3 2M3.500 1v3" fill="none" stroke="#fff" stroke-width="1.300"/><path d="M7 7h5v4H7z" fill="#fff"/></svg>
    <svg viewBox="0 0 16 16"><g fill="none" stroke="#ccc" stroke-width="1.300"><path d="M2 15Q2 4 14 3M5 15Q5 7 14 6M8 15Q8 10 14 9M11 15q0-2 3-3"/></g></svg>
    <svg viewBox="0 0 16 16"><path d="M1 6v4h2l4 4V2L3 6z" fill="none" stroke="#fff"/><path d="M9 6q2 2 0 4m2-6q3 4 0 8m2-10q4 6 0 12" fill="none" stroke="#aaa"/></svg>
    <span>中</span>
    <svg viewBox="0 0 16 16"><path d="m2 1 12 1 1 12-13 2z" fill="#f14a1f"/><path d="M11.500 5Q5 3 5 6q0 2 3 2 4 1 3 3-2 3-7 0" fill="none" stroke="#fff" stroke-width="2"/></svg>
  </div>
  <div class="clock">14:57<br>2017/7/24</div>
  <button class="note" aria-label="通知中心"><svg viewBox="0 0 26 26"><path d="M2 3h16v13H9l-4 4v-4H2z" fill="#fff"/><path d="M5 6.500h10M5 9.500h10M5 12.500h10" stroke="#111"/><circle cx="17" cy="18" r="7.500" fill="#333" stroke="#aaa"/></svg><span>2</span></button>
</div>
</body>
</html>
```
FILE: styles.css
```css
* { box-sizing: border-box; }
body {
  margin: 0; height: 100vh; display: flex; flex-direction: column; overflow: hidden;
  background: #f0f0f0; color: #000;
  font: 12px/16px "Open Sans", "Noto Sans CJK SC", sans-serif;
}
button, select, input { font: inherit; color: inherit; margin: 0; padding: 0; border: 0; background: none; }
ul, h1, h2, p { margin: 0; padding: 0; list-style: none; font: inherit; }
tt { font: 10px/16px "Liberation Mono", monospace; }
.defs { position: absolute; width: 0; height: 0; }
.i { width: 16px; height: 16px; flex: none; display: block; }
.grow { flex: 1; }

.title { display: flex; align-items: center; height: 23px; padding-left: 2px; gap: 5px; background: #fff; color: #999; flex: none; }
.title h1 { flex: 1; white-space: nowrap; font-family: Inter, "Noto Sans CJK SC", sans-serif; }
.wins { display: flex; width: 138px; justify-content: space-around; margin-right: 2px; }
.wins path { fill: none; stroke: #888; }
.ball { position: absolute; top: -28px; left: 1082px; width: 46px; height: 46px; border-radius: 50%; border: 2px solid #eee; background: #3cc25b; box-shadow: 0 1px 5px #777, inset 0 0 0 1px #258d49; color: #fff; text-align: center; padding-top: 24px; line-height: 18px; }

.menu { display: flex; align-items: center; height: 31px; flex: none; padding-left: 1px; white-space: nowrap; }
.menu > button:not(.t) { padding: 0 5px 0 6px; }
.menu > .t { padding-left: 6px; }
.notice { width: 187px; height: 27px; margin-left: 3px; justify-content: center; color: #00605e; }
.account { flex: 1; height: 27px; margin-left: 2px; }
.bean { margin-left: 4px; margin-right: 4px; }
.row { display: flex; height: 28px; flex: none; gap: 1px; }
.row-top { height: 30px; }
.tb { display: flex; align-items: center; background: linear-gradient(#fcfcfc, #f0f0f0); border-radius: 3px; white-space: nowrap; min-width: 0; padding-bottom: 2px; }
.t { display: flex; align-items: center; height: 23px; padding: 0 3px; border: 1px solid transparent; flex: none; gap: 3px; }
.t:disabled { color: #858585; }
.t.on { border-color: #0078d7; background: #dceaf6; }
.a { flex: none; width: 0; height: 0; border: 3px solid transparent; border-top-color: #000; border-bottom: 0; margin: 0 1px 0 2px; }
.a.n { margin: 0; }
.a.tight { margin: 0 2px; }
.sep { width: 1px; height: 16px; background: #b5b5b5; margin: 0 1px 0 4px; flex: none; }
.sep.wide { margin: 0 3px 0 5px; }
.hd { width: 3px; height: 15px; margin-left: 4px; flex: none; background: repeating-linear-gradient(#bbb 0 2px, transparent 2px 4px); }
.more { margin-left: auto; padding-right: 2px; align-self: flex-start; font-size: 14px; font-weight: 600; line-height: 14px; }
.files { width: 151px; padding-left: 1px; }
.files .sep { height: 24px; }
.tools { width: 550px; padding-left: 1px; }
.views { padding-left: 4px; }
.viewmode { display: flex; align-items: center; width: 60px; height: 22px; background: #fff; padding-left: 1px; gap: 2px; }

select { appearance: none; height: 24px; padding: 0 16px 0 2px; border-radius: 0; flex: none;
  background:
    linear-gradient(to top right, transparent 45%, #000 50%) right 6px top 11px / 3px 3px no-repeat,
    linear-gradient(to top left, transparent 45%, #000 50%) right 3px top 11px / 3px 3px no-repeat,
    linear-gradient(#f5f5f5, #f5f5f5) right / 12px 100% no-repeat, #fff; }
.viewmode select { flex: 1; height: 22px; padding: 0 12px 0 0; min-width: 0; }
.c1 { width: 58px; margin-right: 4px; }
.c2 { width: 69px; margin-right: 3px; }
.t + .c1 { width: 55px; margin: 0 2px 0 1px; }
.stub { width: 28px; margin-left: 3px; }

main { flex: 1; display: flex; min-height: 0; gap: 5px; padding-right: 1px; }
aside { width: 198px; flex: none; display: flex; flex-direction: column; padding-bottom: 1px; }
.cap { height: 15px; flex: none; border: 1px solid #777; margin-bottom: 1px; display: flex; justify-content: space-between; align-items: center; overflow: hidden; }
.cap svg { width: 30px; height: 12px; margin-right: 3px; }
.bar { height: 23px; flex: none; border: 1px solid #a0a0a0; box-shadow: inset 1px 1px #fff; background: #f0f0f0; }
.bar + .bar { border-top: 0; height: 22px; }
.expand { height: 27px; flex: none; display: flex; gap: 5px; padding: 5px 6px 0; border: 1px solid #aaa; border-bottom: 0; background: linear-gradient(#fcfcfc, #f0f0f0); }
.expand svg { width: 18px; height: 18px; }
.treebox { flex: 1; min-height: 0; display: flex; border: 2px solid #8a929c; background: #fff; overflow: hidden; }
.tree { flex: 1; overflow: hidden; padding-top: 1px; }
.tree ul { margin-left: 13px; border-left: 1px dotted #808080; padding-left: 18px; }
.tree li { display: flex; align-items: center; height: 16px; border-left: 1px dotted #808080; white-space: nowrap; }
.tree li::before { content: ""; width: 9px; border-top: 1px dotted #808080; flex: none; margin-right: 1px; }
.tree li span { padding: 0 3px 0 4px; line-height: 16px; margin-left: 1px; }
.tree li.sel span { background: #d9d9d9; margin-left: 0; padding-left: 5px; }
.tree li.sel .i { background: #d9d9d9; }
.g { display: flex; align-items: center; height: 16px; padding-left: 8px; width: 100%; }
.g .i { margin: 0 5px 0 8px; }
.ch { width: 8px; height: 8px; border: solid #444; border-width: 0 2px 2px 0; transform: rotate(45deg) scale(.8); flex: none; margin-top: -4px; }
.ch.closed { transform: rotate(-45deg) scale(.8); margin-top: 0; border-color: #aaa; }
.vscroll { width: 16px; background: #f0f0f0; display: flex; flex-direction: column; justify-content: space-between; }
.vscroll i { height: 265px; background: #cdcdcd; }
.vscroll i { margin: 0 0 14px; }
.vscroll svg, .hscroll svg { width: 16px; height: 16px; fill: none; stroke: #555; stroke-width: 2; flex: none; }

.work { flex: 1; min-width: 0; display: flex; flex-direction: column; }
.view { position: relative; flex: 1; min-height: 0; background: #000; overflow: hidden; }
.cad { display: block; }
.axis text { fill: #ddd; font: 14px "Liberation Sans", Arial, sans-serif; text-anchor: middle; }
.axis .dim { fill: #c08cc0; }
.dialog { position: absolute; left: 296px; top: 108px; width: 362px; height: 122px; border: 1px solid #1883d7; background: #fff; display: flex; flex-direction: column; }
.dialog h2 { padding: 4px 3px 0; }
.msg { flex: 1; display: flex; gap: 12px; padding: 16px 11px 0; }
.msg svg { width: 30px; height: 30px; }
.msg p { padding-top: 5px; font-family: "Noto Sans CJK SC", sans-serif; }
.foot { height: 43px; background: #f0f0f0; border-top: 1px solid #dfdfdf; display: flex; justify-content: flex-end; padding: 9px 11px 0; }
.foot button { width: 66px; height: 23px; border: 2px solid #0078d7; background: #e1e1e1; }
.snaps { height: 32px; padding: 1px 0 3px; gap: 2px; }
.snaps .tb { padding-left: 2px; }

.panels { display: flex; height: 199px; flex: none; }
.dots { width: 13px; display: flex; flex-direction: column; align-items: center; flex: none; }
.dots svg { width: 10px; height: 10px; }
.dots i { flex: 1; width: 8px; margin-top: 4px; background: radial-gradient(circle at 1px 1px, #b5b5b5 1px, transparent 2px) 0 0 / 4px 5px; }
.dots.second { width: 17px; padding-left: 5px; align-items: flex-start; }
.panel { display: flex; flex-direction: column; min-width: 0; }
.p1 { flex: 564 1 0; }
.p2 { flex: 569 1 0; }
.ptb { height: 27px; flex: none; }
.p1 .ptb { gap: 1px; }
.p1 .t:not(:has(svg)) { padding: 0 4px 0 3px; }
.sheet { flex: 1; min-height: 0; background: #fff; border: 1px solid #a0a4aa; overflow: hidden; display: flex; flex-direction: column; justify-content: space-between; padding-right: 1px; }
.sheet table { border-collapse: separate; border-spacing: 0; table-layout: fixed; width: 0; flex: none; }
.sheet th, .sheet td { height: 19px; padding: 0; border: solid #bcbcbc; border-width: 0 1px 1px 0; white-space: nowrap; overflow: hidden; line-height: 16px; }
.sheet th { background: linear-gradient(#fff, #f0f0f0); font-weight: 400; }
.sheet th.hot { background: linear-gradient(#fbdca0, #f2bb58); color: #5c0050; }
.sheet th.num { background: #ffd283; color: #5c0050; font: 11px/16px "Liberation Mono", monospace; }
.sheet .sel td { background: #a8caf0; }
.sheet .sel td.cur { background: #8cbbee; border: 3px solid #7f7f7f; }
.sheet .edit { background: #d8e9f8; border-right-color: #000; }
.sheet th.up { text-align: left; padding-left: 15px; }
.sheet th.side { padding-left: 74px; }
.w30 { width: 30px; } .w33 { width: 33px; } .w36 { width: 36px; } .w42 { width: 42px; } .w56 { width: 56px; }
.w73 { width: 73px; } .w81 { width: 81px; } .w99 { width: 99px; } .w164 { width: 164px; } .w201 { width: 201px; }
.hscroll { height: 17px; display: flex; align-items: center; background: #f0f0f0; margin-bottom: 1px; }
.hscroll i { height: 15px; width: 66px; background: #cdcdcd; margin: 0 auto 0 232px; }
.p2 .hscroll i { width: 87px; margin-left: 2px; }

.status { display: flex; gap: 2px; height: 22px; flex: none; padding: 1px 0; }
.status div { border: 1px solid #d5d5d5; border-width: 1px 1px 1px 0; background: linear-gradient(#fff, #f3f3f3); padding: 1px 2px; white-space: nowrap; }
.s1 { width: 148px; } .s2 { width: 78px; } .s3 { width: 98px; } .s4 { width: 48px; } .s5 { width: 70px; }

.taskbar { height: 40px; flex: none; display: flex; background: #010a0d; color: #fff; }
.start { width: 48px; background: #000; }
.start svg { width: 16px; height: 16px; }
.search { width: 344px; background: #333; display: flex; align-items: center; gap: 5px; padding: 0 13px 0 8px; }
.search svg { width: 22px; height: 22px; }
.search .mic { width: 16px; height: 20px; fill: none; stroke: #aaa; }
.search input { flex: 1; min-width: 0; outline: 0; font-size: 14px; line-height: 20px; height: 24px; }
.search input::placeholder { color: #999; opacity: 1; }
.apps { display: flex; width: 447px; padding-left: 2px; justify-content: space-between; }
.apps button { width: 48px; height: 40px; display: flex; align-items: center; justify-content: center; }
.apps svg { width: 24px; height: 24px; }
.apps .run { background: linear-gradient(#76b9ed, #76b9ed) bottom / 40px 3px no-repeat; }
.apps .cur { background: linear-gradient(#76b9ed, #76b9ed) bottom / 48px 3px no-repeat, #343c40; }
.cpu { margin-left: auto; width: 66px; text-align: center; line-height: 17px; padding-top: 3px; }
.tray { display: flex; align-items: center; gap: 8px; padding-left: 9px; }
.tray svg { width: 16px; height: 16px; }
.tray span { font-size: 14px; margin-right: 4px; }
.clock { width: 86px; text-align: center; line-height: 19px; padding-top: 1px; margin-left: 4px; }
.note { width: 47px; position: relative; }
.note svg { width: 26px; height: 26px; display: block; margin-left: 3px; }
.note span { position: absolute; left: 16px; top: 17px; width: 8px; line-height: 16px; }
```
